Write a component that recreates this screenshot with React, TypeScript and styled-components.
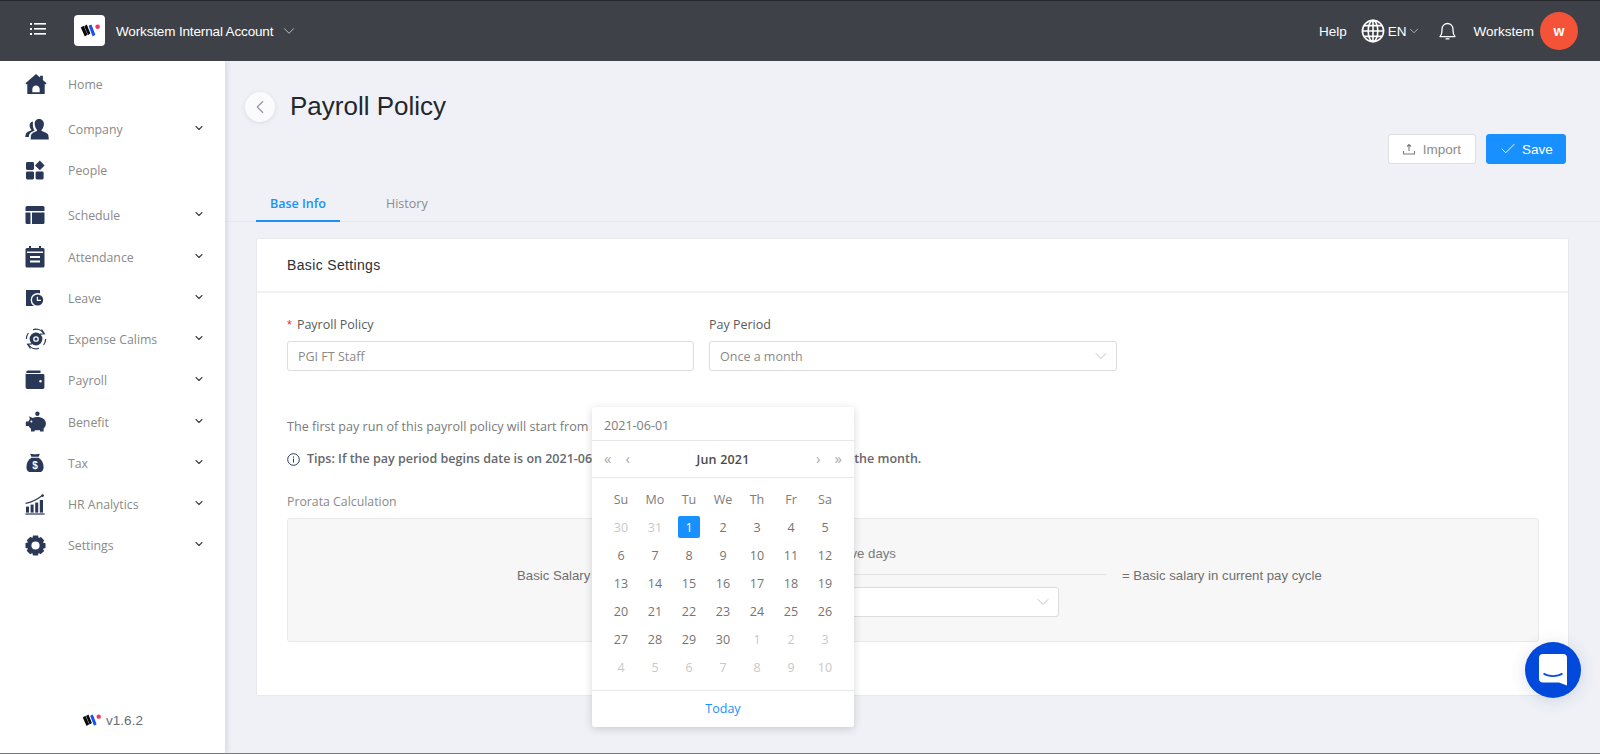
import React from 'react';
import styled, { createGlobalStyle } from 'styled-components';
import { ChevronDown, ChevronLeft, Check } from 'lucide-react';

const GlobalStyle = createGlobalStyle`
  html, body {
    margin: 0;
    padding: 0;
    height: 100%;
    overflow: hidden;
    background: #eff1f6;
    font-family: 'Open Sans', 'Liberation Sans', sans-serif;
  }
`;

const ARIAL = `'Liberation Sans', Arial, sans-serif`;
const NAVY = '#2a3858';

const Logo = ({ size = 20 }: { size?: number }) => (
  <svg width={size} height={size * 0.65} viewBox="0 0 20 13">
    <path d="M.8 3.6 3.6 1.8 7.6 10.8 4.8 12.6Z" fill="#0b0b0b" />
    <path d="M4.2 2.2 6.8.6 10.4 9.4 8 11Z" fill="#0b0b0b" />
    <path d="M8.6 1.8 11.4.4 15.4 10.8 12.6 12.4Z" fill="#1554e8" />
    <circle cx="17.6" cy="2.8" r="2.3" fill="#f5365c" />
  </svg>
);

const HomeIcon = () => (
  <svg width="22" height="22" viewBox="0 0 24 24" fill={NAVY}>
    <path fillRule="evenodd" d="M12 1 16.5 5V3H19.5V7.6L23.5 11.3 22.4 12.6 21.5 11.8V23H2.5V11.8L1.6 12.6.5 11.3ZM8 21H16V17.5C16 15.3 14.2 13.5 12 13.5S8 15.3 8 17.5Z" />
  </svg>
);
const CompanyIcon = () => (
  <svg width="24" height="22" viewBox="0 0 24 22" fill={NAVY}>
    <path d="M14 1C10.8 1 9.4 3.6 9.7 6.4 10 9 11 10.8 12 11.8V13C9.5 14 6.6 14.8 6 17.5L5.6 21.5H23.8L23.4 17.5C22.9 14.8 19 14 16.6 13V11.8C17.7 10.8 18.6 9 18.9 6.4 19.1 3.6 17.4 1 14 1Z" />
    <path d="M8 3.4C5.6 3.6 4.4 5.6 4.6 7.8 4.8 9.5 5.4 10.8 6.2 11.6V12.4C4 13.2 1.4 14 .8 16L.2 19H3.8L4.2 16.8C4.8 14.8 7 13.6 9.6 12.8 8.4 10.8 7.4 7.4 8 3.4Z" />
  </svg>
);
const PeopleIcon = () => (
  <svg width="20" height="20" viewBox="0 0 20 20" fill={NAVY}>
    <rect x="1" y="2" width="8" height="8" rx="1.4" />
    <rect x="1" y="11.4" width="8" height="8" rx="1.4" />
    <rect x="10.6" y="11.4" width="8" height="8" rx="1.4" />
    <path d="M14.8.6 19.6 5.4 14.8 10.2 10 5.4Z" />
  </svg>
);
const ScheduleIcon = () => (
  <svg width="20" height="20" viewBox="0 0 20 20" fill={NAVY}>
    <path d="M2 1H18A1.5 1.5 0 0 1 19.5 2.5V6H.5V2.5A1.5 1.5 0 0 1 2 1Z" />
    <path d="M.5 7.4H5.5V19H2A1.5 1.5 0 0 1 .5 17.5Z" />
    <path d="M7 7.4H19.5V17.5A1.5 1.5 0 0 1 18 19H7Z" />
  </svg>
);
const AttendanceIcon = () => (
  <svg width="20" height="22" viewBox="0 0 20 22" fill={NAVY}>
    <path fillRule="evenodd" d="M4 0H6V2H14V0H16V2H18A1.5 1.5 0 0 1 19.5 3.5V20A1.5 1.5 0 0 1 18 21.5H2A1.5 1.5 0 0 1 .5 20V3.5A1.5 1.5 0 0 1 2 2H4ZM2 5.5V7H18V5.5ZM5 10V12H15V10ZM5 14.5V16.5H15V14.5Z" />
  </svg>
);
const LeaveIcon = () => (
  <svg width="20" height="20" viewBox="0 0 20 18">
    <rect x="1" y="1" width="14" height="16" fill={NAVY} />
    <circle cx="12.6" cy="11" r="7" fill="#fff" />
    <circle cx="12.6" cy="11" r="5.6" fill={NAVY} />
    <path d="M12.4 7.8V11.4H16" fill="none" stroke="#fff" strokeWidth="1.2" />
  </svg>
);
const ExpenseIcon = () => (
  <svg width="22" height="22" viewBox="0 0 22 22" fill="none" stroke={NAVY}>
    <circle cx="11" cy="11" r="6.4" fill={NAVY} stroke="none" />
    <circle cx="11" cy="11" r="2.2" stroke="#fff" strokeWidth="1.3" />
    <path d="M19 5.6A9.6 9.6 0 0 0 8 1.7M3 16.4A9.6 9.6 0 0 0 14 20.3M1.4 11A9.6 9.6 0 0 1 3.4 5M20.6 11A9.6 9.6 0 0 1 18.6 17" strokeWidth="1.2" />
    <path d="M16.5 1.5 19.4 5.8 15 6.2" strokeWidth="1.2" />
    <path d="M5.5 20.5 2.6 16.2 7 15.8" strokeWidth="1.2" />
  </svg>
);
const PayrollIcon = () => (
  <svg width="20" height="20" viewBox="0 0 20 20" fill={NAVY}>
    <path fillRule="evenodd" d="M3 .6H15.5V3H2C1 3 .8 2 1.6 1.3 2 .9 2.4.6 3 .6ZM1.4 4H18A1.4 1.4 0 0 1 19.4 5.4V17.6A1.4 1.4 0 0 1 18 19H2.4A1.8 1.8 0 0 1 .6 17.2V3.6C.8 3.8 1 4 1.4 4ZM15.5 10A1.3 1.3 0 1 0 15.5 12.6 1.3 1.3 0 0 0 15.5 10Z" />
  </svg>
);
const BenefitIcon = () => (
  <svg width="22" height="22" viewBox="0 0 22 22" fill={NAVY}>
    <circle cx="12.4" cy="2.8" r="2.2" />
    <path fillRule="evenodd" d="M4.2 5.2 7.6 7C9 6.4 10.6 6.1 12.4 6.1 17.2 6.1 20.6 8.6 20.9 12.2 21 14.4 20 16.3 18.6 17.6V20.4H15.2L14.6 19C13.2 19.4 11.6 19.5 10 19.2L9.4 20.4H6V17.8C5 17.1 4.2 16.2 3.6 15.1H1.4C1 15.1.8 14.8.8 14.4V11.2C.8 10.8 1 10.5 1.4 10.5H3.4C3.8 9.6 4.3 8.9 4.9 8.3ZM6.4 9.6A1 1 0 1 0 6.4 11.6 1 1 0 0 0 6.4 9.6Z" />
  </svg>
);
const TaxIcon = () => (
  <svg width="20" height="20" viewBox="0 0 20 22" fill={NAVY}>
    <path d="M4.6.8C7 1.4 13 1.4 15.4.8L14 4.2H6Z" />
    <path d="M6 5.2H14C17.4 7.4 19.4 10.6 19.4 15.6 19.4 19.4 17.4 21 14.5 21H5.5C2.6 21 .6 19.4.6 15.6.6 10.6 2.6 7.4 6 5.2Z" />
    <text x="10" y="18" textAnchor="middle" fontSize="11" fontWeight="700" fill="#fff" fontFamily={ARIAL}>$</text>
  </svg>
);
const AnalyticsIcon = () => (
  <svg width="20" height="21" viewBox="0 0 20 21" fill={NAVY}>
    <rect x=".4" y="19.4" width="19.2" height="1.2" />
    <rect x="1" y="12.6" width="3" height="6" />
    <rect x="5.6" y="10.6" width="3" height="8" />
    <rect x="10.2" y="8.6" width="3" height="10" />
    <rect x="14.8" y="6" width="3.2" height="12.6" />
    <path d="M.6 9.4C6 8.4 12 5.6 17 1.8" fill="none" stroke={NAVY} strokeWidth="1.1" />
    <circle cx="17.6" cy="1.6" r="1.4" />
  </svg>
);
const SettingsIcon = () => (
  <svg width="21" height="21" viewBox="0 0 21 21" fill={NAVY}>
    <path fillRule="evenodd" d="M8 .5H13L13.7 3 16 1.9 19.3 5.5 17.8 7.4 20.5 8.2V13L17.9 13.7 19.2 16 15.6 19.3 13.6 17.9 13 20.5H8L7.3 17.9 5.2 19.2 1.7 15.7 3 13.6.5 13V8.1L3 7.4 1.8 5.2 5.4 1.8 7.4 3ZM10.5 6.4A4.1 4.1 0 1 0 10.5 14.6 4.1 4.1 0 0 0 10.5 6.4Z" />
  </svg>
);

const navItems = [
  { label: 'Home', icon: <HomeIcon />, gap: 0, arrow: false },
  { label: 'Company', icon: <CompanyIcon />, gap: 5, arrow: true },
  { label: 'People', icon: <PeopleIcon />, gap: 1, arrow: false },
  { label: 'Schedule', icon: <ScheduleIcon />, gap: 5, arrow: true },
  { label: 'Attendance', icon: <AttendanceIcon />, gap: 2, arrow: true },
  { label: 'Leave', icon: <LeaveIcon />, gap: 1, arrow: true },
  { label: 'Expense Calims', icon: <ExpenseIcon />, gap: 1, arrow: true },
  { label: 'Payroll', icon: <PayrollIcon />, gap: 1, arrow: true },
  { label: 'Benefit', icon: <BenefitIcon />, gap: 2, arrow: true },
  { label: 'Tax', icon: <TaxIcon />, gap: 1, arrow: true },
  { label: 'HR Analytics', icon: <AnalyticsIcon />, gap: 1, arrow: true },
  { label: 'Settings', icon: <SettingsIcon />, gap: 1, arrow: true },
];

const weekDays = ['Su', 'Mo', 'Tu', 'We', 'Th', 'Fr', 'Sa'];
const calendarDays = [
  ...[30, 31].map((d) => ({ day: d, muted: true })),
  ...Array.from({ length: 30 }, (_, i) => ({ day: i + 1, muted: false })),
  ...Array.from({ length: 10 }, (_, i) => ({ day: i + 1, muted: true })),
];

const App = () => {
  return (
    <Page>
      <GlobalStyle />
      <TopBar>
        <MenuButton>
          <svg width="16" height="14" viewBox="0 0 16 14" fill="#fff">
            <rect x="0" y="1" width="2" height="2" />
            <rect x="0" y="6" width="2" height="2" />
            <rect x="0" y="11" width="2" height="2" />
            <rect x="4" y="1" width="12" height="1.6" />
            <rect x="4" y="6" width="12" height="1.6" />
            <rect x="4" y="11" width="12" height="1.6" />
          </svg>
        </MenuButton>
        <LogoBox>
          <Logo size={20} />
        </LogoBox>
        <AccountName>Workstem Internal Account</AccountName>
        <ChevronDown size={18} color="#c4c6ca" strokeWidth={1.2} />
        <TopRight>
          <TopText>Help</TopText>
          <svg width="24" height="24" viewBox="0 0 24 24" fill="none" stroke="#fff" strokeWidth="1.6">
            <circle cx="12" cy="12" r="10.6" />
            <ellipse cx="12" cy="12" rx="4.8" ry="10.6" />
            <path d="M12 1.4V22.6M1.4 12H22.6M3 6.6H21M3 17.4H21" />
          </svg>
          <LangText>EN</LangText>
          <LangArrow>
            <ChevronDown size={14} color="#c4c6ca" strokeWidth={1.4} />
          </LangArrow>
          <BellWrap>
            <svg width="17" height="18" viewBox="0 0 17 18" fill="none" stroke="#fff" strokeWidth="1.3">
              <path d="M1 14.6H16C14.4 13 14 11.4 14 8.6V7A5.5 5.5 0 0 0 3 7V8.6C3 11.4 2.6 13 1 14.6Z" strokeLinejoin="round" />
              <path d="M6.6 16.8H10.4" />
            </svg>
          </BellWrap>
          <UserName>Workstem</UserName>
          <Avatar>w</Avatar>
        </TopRight>
      </TopBar>

      <Body>
        <Sidebar>
          <NavList>
            {navItems.map((item) => (
              <NavRow key={item.label} $gap={item.gap}>
                <NavIcon>{item.icon}</NavIcon>
                <NavLabel>{item.label}</NavLabel>
                {item.arrow && (
                  <NavArrow>
                    <ChevronDown size={12} color="#3d4148" strokeWidth={2.2} />
                  </NavArrow>
                )}
              </NavRow>
            ))}
          </NavList>
          <Version>
            <Logo size={19} />
            <span>v1.6.2</span>
          </Version>
        </Sidebar>

        <Main>
          <TitleRow>
            <BackButton>
              <ChevronLeft size={22} color="#8f93a8" strokeWidth={1.2} />
            </BackButton>
            <PageTitle>Payroll Policy</PageTitle>
          </TitleRow>
          <Actions>
            <ImportButton>
              <svg width="12" height="12" viewBox="0 0 12 12" fill="none" stroke="#77797d" strokeWidth="1.1">
                <path d="M6 8V1.5M4 3.5 6 1.5 8 3.5M.5 8V11H11.5V8" />
              </svg>
              Import
            </ImportButton>
            <SaveButton>
              <Check size={18} color="#fff" strokeWidth={1.3} />
              Save
            </SaveButton>
          </Actions>
          <Tabs>
            <Tab $active>Base Info</Tab>
            <Tab>History</Tab>
          </Tabs>

          <Card>
            <CardHeader>Basic Settings</CardHeader>
            <CardBody>
              <FieldRow>
                <div>
                  <FieldLabel>
                    <Required>*</Required>Payroll Policy
                  </FieldLabel>
                  <InputBox>PGI FT Staff</InputBox>
                </div>
                <div>
                  <FieldLabel>Pay Period</FieldLabel>
                  <InputBox>
                    Once a month
                    <ChevronDown size={20} color="#b5b5b5" strokeWidth={1} />
                  </InputBox>
                </div>
              </FieldRow>
              <StartLine>The first pay run of this payroll policy will start from</StartLine>
              <TipLine>
                <svg width="13" height="13" viewBox="0 0 13 13" fill="none" stroke={NAVY} strokeWidth="1">
                  <circle cx="6.5" cy="6.5" r="5.8" />
                  <path d="M6.5 5.6V9.6M6.5 3.4V4.6" />
                </svg>
                Tips: If the pay period begins date is on 2021-06-01, the pay cycle shall run up to the end of the month.
              </TipLine>
              <ProrataLabel>Prorata Calculation</ProrataLabel>
              <ProrataBox>
                <FormulaText>Basic Salary</FormulaText>
                <Fraction>
                  <FractionTop>Effective days</FractionTop>
                  <FractionSelect>
                    <ChevronDown size={20} color="#b5b5b5" strokeWidth={1} />
                  </FractionSelect>
                </Fraction>
                <FormulaResult>= Basic salary in current pay cycle</FormulaResult>
              </ProrataBox>
            </CardBody>
          </Card>
        </Main>
      </Body>

      <DatePopup>
        <DateInput>2021-06-01</DateInput>
        <MonthBar>
          <MonthNav>
            <span>«</span>
            <span>‹</span>
          </MonthNav>
          <MonthTitle>Jun 2021</MonthTitle>
          <MonthNav $right>
            <span>›</span>
            <span>»</span>
          </MonthNav>
        </MonthBar>
        <DayGrid>
          {weekDays.map((d) => (
            <WeekDay key={d}>{d}</WeekDay>
          ))}
          {calendarDays.map((c, i) => (
            <DayCell key={i} $muted={c.muted}>
              <DayNumber $selected={!c.muted && c.day === 1}>{c.day}</DayNumber>
            </DayCell>
          ))}
        </DayGrid>
        <TodayBar>Today</TodayBar>
      </DatePopup>

      <ChatButton>
        <svg width="28" height="32" viewBox="0 0 28 32">
          <path d="M4 0H24A4 4 0 0 1 28 4V31.5L20 28.4H4A4 4 0 0 1 0 24.4V4A4 4 0 0 1 4 0Z" fill="#fff" />
          <path d="M4.5 19.5C9.5 23 18.5 23 23.5 19.5" fill="none" stroke="#0a4fdc" strokeWidth="1.6" />
        </svg>
      </ChatButton>
    </Page>
  );
};

export default App;

const Page = styled.div`
  position: relative;
  box-sizing: border-box;
  width: 1600px;
  height: 754px;
  display: flex;
  flex-direction: column;
  overflow: hidden;
  border-top: 1px solid #24262b;
  border-bottom: 1px solid #77787c;
`;

const TopBar = styled.header`
  flex: 0 0 60px;
  position: relative;
  z-index: 3;
  display: flex;
  align-items: center;
  background: #3e4248;
  padding: 0 22px 0 30px;
  font-family: ${ARIAL};
  color: #fff;
`;

const MenuButton = styled.div`
  display: flex;
  width: 44px;
  margin-bottom: 5px;
`;

const LogoBox = styled.div`
  width: 31px;
  height: 31px;
  box-sizing: border-box;
  display: flex;
  align-items: center;
  justify-content: center;
  background: #fff;
  border-radius: 4px;
  margin-right: 11px;
  margin-bottom: 1px;
`;

const AccountName = styled.span`
  font-size: 13.5px;
  letter-spacing: -0.15px;
  margin-right: 7px;
`;

const TopRight = styled.div`
  margin-left: auto;
  display: flex;
  align-items: center;
`;

const TopText = styled.span`
  font-size: 13.5px;
  margin-right: 14px;
`;

const LangText = styled.span`
  font-size: 13.5px;
  margin-left: 3px;
`;

const LangArrow = styled.span`
  display: flex;
  margin-left: 1px;
`;

const BellWrap = styled.span`
  display: flex;
  margin: 0 17px 0 18px;
`;

const UserName = styled.span`
  font-size: 13.5px;
  margin-right: 6px;
`;

const Avatar = styled.div`
  width: 38px;
  height: 38px;
  border-radius: 50%;
  display: flex;
  align-items: center;
  justify-content: center;
  background: #f45338;
  font-size: 14px;
  font-weight: 700;
`;

const Body = styled.div`
  flex: 1;
  display: flex;
  min-height: 0;
`;

const Sidebar = styled.aside`
  flex: 0 0 225px;
  position: relative;
  z-index: 2;
  display: flex;
  flex-direction: column;
  justify-content: space-between;
  background: #fff;
  box-shadow: 2px 0 5px rgba(120, 135, 175, 0.22);
`;

const NavList = styled.nav`
  display: flex;
  flex-direction: column;
  padding-top: 3px;
`;

const NavRow = styled.div<{ $gap: number }>`
  height: 40px;
  margin-top: ${(p) => p.$gap}px;
  display: flex;
  align-items: center;
  padding-left: 25px;
  padding-right: 20px;
`;

const NavIcon = styled.span`
  width: 43px;
  display: flex;
`;

const NavLabel = styled.span`
  flex: 1;
  font-size: 12.3px;
  color: #8a8a8a;
`;

const NavArrow = styled.span`
  display: flex;
  margin-bottom: 3px;
`;

const Version = styled.div`
  display: flex;
  align-items: center;
  justify-content: center;
  gap: 5px;
  padding-bottom: 25px;
  font-family: ${ARIAL};
  font-size: 13.5px;
  color: #6a6d73;
`;

const Main = styled.main`
  flex: 1;
  min-width: 0;
  display: flex;
  flex-direction: column;
  padding-top: 31px;
`;

const TitleRow = styled.div`
  display: flex;
  align-items: center;
  padding-left: 20px;
  height: 30px;
`;

const BackButton = styled.div`
  width: 30px;
  height: 30px;
  border-radius: 50%;
  display: flex;
  align-items: center;
  justify-content: center;
  background: #fbfbfd;
  box-shadow: 0 1px 4px rgba(80, 90, 120, 0.14);
  margin-right: 15px;
`;

const PageTitle = styled.h1`
  margin: 0 0 2px;
  font-family: ${ARIAL};
  font-size: 26px;
  font-weight: 400;
  color: #24272c;
`;

const Actions = styled.div`
  display: flex;
  justify-content: flex-end;
  gap: 10px;
  margin-top: 12px;
  padding-right: 34px;
`;

const BaseButton = styled.button`
  height: 30px;
  box-sizing: border-box;
  display: flex;
  align-items: center;
  justify-content: center;
  gap: 8px;
  border-radius: 3px;
  font-family: ${ARIAL};
  font-size: 13.5px;
  padding: 0;
`;

const ImportButton = styled(BaseButton)`
  width: 88px;
  background: #fff;
  border: 1px solid #dedfe2;
  color: #8c8c8c;
`;

const SaveButton = styled(BaseButton)`
  width: 80px;
  gap: 5px;
  background: #1890ff;
  border: 1px solid #1890ff;
  color: #fff;
`;

const Tabs = styled.div`
  display: flex;
  height: 58px;
  box-sizing: border-box;
  align-items: flex-end;
  padding-left: 31px;
  border-bottom: 1px solid #e8e9ec;
`;

const Tab = styled.div<{ $active?: boolean }>`
  box-sizing: border-box;
  height: 38px;
  width: ${(p) => (p.$active ? '84px' : 'auto')};
  margin-left: ${(p) => (p.$active ? '0' : '46px')};
  margin-bottom: -1px;
  line-height: 40px;
  text-align: center;
  font-size: 12.5px;
  font-weight: ${(p) => (p.$active ? 600 : 400)};
  color: ${(p) => (p.$active ? '#1890ff' : '#8c8c8c')};
  border-bottom: 2px solid ${(p) => (p.$active ? '#1890ff' : 'transparent')};
`;

const Card = styled.section`
  margin: 16px 31px 0;
  height: 458px;
  box-sizing: border-box;
  background: #fff;
  border: 1px solid #e8e9ec;
  border-radius: 2px;
`;

const CardHeader = styled.div`
  height: 54px;
  box-sizing: border-box;
  padding: 18px 30px 0;
  border-bottom: 2px solid #f2f2f4;
  font-family: ${ARIAL};
  font-size: 14px;
  letter-spacing: 0.35px;
  color: #2c2e33;
`;

const CardBody = styled.div`
  padding: 23px 29px 0 30px;
`;

const FieldRow = styled.div`
  display: grid;
  grid-template-columns: 407px 408px;
  gap: 15px;
`;

const FieldLabel = styled.div`
  font-size: 12.5px;
  line-height: 18px;
  color: #5a5a5a;
  margin-bottom: 7px;
`;

const Required = styled.span`
  color: #f5222d;
  margin-right: 5px;
  font-family: ${ARIAL};
`;

const InputBox = styled.div`
  height: 30px;
  box-sizing: border-box;
  display: flex;
  align-items: center;
  justify-content: space-between;
  padding: 0 5px 0 10px;
  background: #fff;
  border: 1px solid #dcdcdf;
  border-radius: 3px;
  font-size: 12.5px;
  color: #8a8a8a;
`;

const StartLine = styled.div`
  margin-top: 47px;
  font-size: 12.6px;
  line-height: 18px;
  color: #7a7a7a;
`;

const TipLine = styled.div`
  margin-top: 14px;
  display: flex;
  align-items: center;
  gap: 7px;
  font-size: 12.5px;
  line-height: 18px;
  font-weight: 600;
  color: #66686c;
  white-space: nowrap;
`;

const ProrataLabel = styled.div`
  margin-top: 25px;
  font-size: 12.3px;
  line-height: 18px;
  color: #8a8a8a;
`;

const ProrataBox = styled.div`
  margin-top: 7px;
  height: 124px;
  box-sizing: border-box;
  display: flex;
  align-items: center;
  background: #f7f7f7;
  border: 1px solid #e9e9e9;
  border-radius: 3px;
  padding-left: 229px;
  font-family: ${ARIAL};
  font-size: 13.2px;
  color: #6f6f6f;
`;

const FormulaText = styled.span`
  width: 87px;
  margin-bottom: 10px;
`;

const Fraction = styled.div`
  width: 502px;
  display: flex;
  flex-direction: column;
  align-items: center;
  margin-top: 1px;
`;

const FractionTop = styled.div`
  width: 100%;
  box-sizing: border-box;
  text-align: center;
  line-height: 20px;
  padding: 0 0 10px;
  border-bottom: 1px solid #e2e2e2;
  margin-bottom: 12px;
  color: #7a7a7a;
`;

const FractionSelect = styled.div`
  width: 407px;
  height: 30px;
  box-sizing: border-box;
  display: flex;
  align-items: center;
  justify-content: flex-end;
  padding-right: 5px;
  background: #fff;
  border: 1px solid #dcdcdf;
  border-radius: 3px;
`;

const FormulaResult = styled.span`
  margin-left: 16px;
  margin-bottom: 10px;
`;

const DatePopup = styled.div`
  position: absolute;
  left: 592px;
  top: 406px;
  z-index: 4;
  width: 262px;
  height: 320px;
  display: flex;
  flex-direction: column;
  background: #fff;
  border-radius: 3px;
  box-shadow: 0 2px 8px rgba(0, 0, 0, 0.16);
  font-size: 12.5px;
`;

const DateInput = styled.div`
  height: 33px;
  line-height: 37px;
  padding-left: 12px;
  color: #7c7c7c;
  border-bottom: 1px solid #e8e8e8;
`;

const MonthBar = styled.div`
  height: 36px;
  display: flex;
  align-items: center;
  justify-content: space-between;
  padding: 0 12px;
  border-bottom: 1px solid #e8e8e8;
`;

const MonthNav = styled.div<{ $right?: boolean }>`
  display: flex;
  justify-content: ${(p) => (p.$right ? 'flex-end' : 'flex-start')};
  gap: 14px;
  width: 36px;
  font-size: 15px;
  color: #a9a9a9;
  margin-top: -2px;
`;

const MonthTitle = styled.span`
  font-weight: 600;
  letter-spacing: 0.2px;
  color: #4a4a4a;
`;

const DayGrid = styled.div`
  flex: 1;
  display: grid;
  grid-template-columns: repeat(7, 34px);
  grid-template-rows: 27px repeat(6, 28px);
  justify-content: center;
  align-content: start;
  padding-top: 8px;
`;

const WeekDay = styled.div`
  display: flex;
  align-items: center;
  justify-content: center;
  color: #7c7c7c;
`;

const DayCell = styled.div<{ $muted: boolean }>`
  display: flex;
  align-items: center;
  justify-content: center;
  color: ${(p) => (p.$muted ? '#c9c9c9' : '#747474')};
`;

const DayNumber = styled.span<{ $selected: boolean }>`
  width: 22px;
  height: 22px;
  display: flex;
  align-items: center;
  justify-content: center;
  border-radius: 2px;
  background: ${(p) => (p.$selected ? '#1890ff' : 'transparent')};
  color: ${(p) => (p.$selected ? '#fff' : 'inherit')};
`;

const TodayBar = styled.div`
  height: 36px;
  line-height: 36px;
  text-align: center;
  color: #1890ff;
  border-top: 1px solid #e8e8e8;
`;

const ChatButton = styled.div`
  position: absolute;
  left: 1525px;
  top: 641px;
  z-index: 5;
  width: 56px;
  height: 56px;
  border-radius: 50%;
  display: flex;
  align-items: center;
  justify-content: center;
  background: #0049db;
  box-shadow: 0 2px 16px rgba(40, 60, 120, 0.16);
`;
